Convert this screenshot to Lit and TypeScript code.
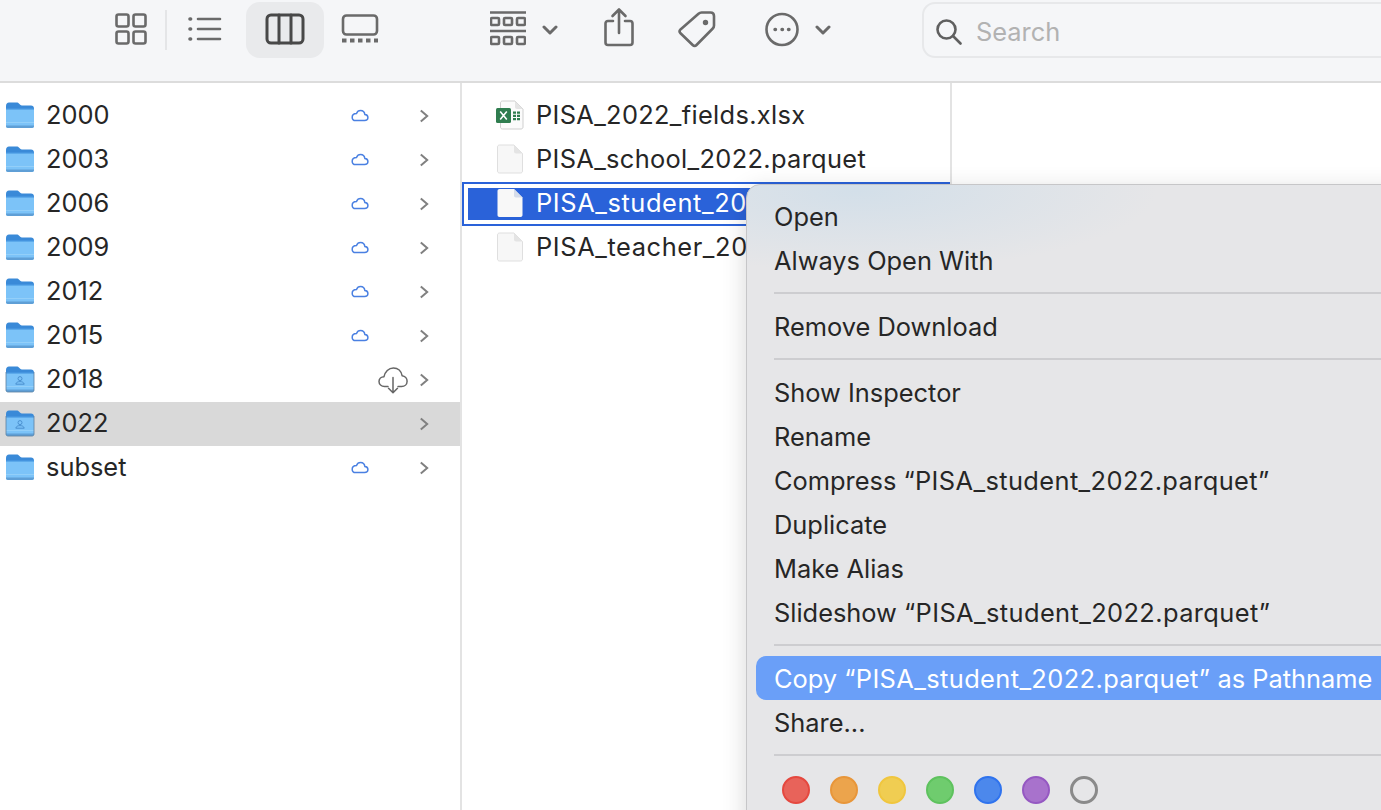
import { LitElement, html, css, svg } from "lit";
import { customElement } from "lit/decorators.js";

const folders = [
  { name: "2000", badge: "cloud" },
  { name: "2003", badge: "cloud" },
  { name: "2006", badge: "cloud" },
  { name: "2009", badge: "cloud" },
  { name: "2012", badge: "cloud" },
  { name: "2015", badge: "cloud" },
  { name: "2018", badge: "download", shared: true },
  { name: "2022", badge: "", shared: true, active: true },
  { name: "subset", badge: "cloud" },
];

// the last two names run under the context menu, only the visible part is kept
const files = [
  { name: "PISA_2022_fields.xlsx", kind: "xlsx" },
  { name: "PISA_school_2022.parquet", kind: "doc" },
  { name: "PISA_student_20", kind: "doc", selected: true, covered: true },
  { name: "PISA_teacher_20", kind: "doc", covered: true },
];

const fileName = html`<span class="fname">“PISA_student_2022.parquet”</span>`;

const tagColors = ["red", "orange", "yellow", "green", "blue", "purple", "none"];

const folderIcon = (shared?: boolean) => html`
  <svg class="folder" viewBox="0 0 30 28" width="30" height="28">
    <path d="M1 5C1 2.800 2.200 1.500 4 1.500h7.500c1.300 0 1.900.4 2.700 1.200l1 1c.5.5 1 .8 1.800.8H26c1.800 0 3 1.200 3 3v6H1z" fill="#3a8ad8" />
    <path d="M1 8h28v17c0 1.200-.8 2-2 2H3c-1.200 0-2-.8-2-2z" fill="#7cc3f8" />
    <path d="M1 7.500h28v1.200H1z" fill="#4f9fe6" />
    <path d="M1 21h28v1H1z" fill="#93cff9" />
    <path d="M1 25c0 1.200.8 2 2 2h24c1.200 0 2-.8 2-2v-.6H1z" fill="#5f9fd6" />
    ${shared
      ? svg`<g fill="none" stroke="#4a90d0" stroke-width="1">
          <circle cx="15" cy="13.600" r="2" />
          <path d="M10.800 19.200c.3-1.800 2-2.600 4.200-2.600s3.900.8 4.200 2.600z" />
        </g>
        <path d="M1 7v18c0 1.200.8 2 2 2h24c1.200 0 2-.8 2-2V7" fill="none" stroke="#5a7f9f" stroke-width=".8" />`
      : ""}
  </svg>
`;

const cloudIcon = html`
  <svg class="cloud" viewBox="0 0 18 14" width="18" height="14">
    <path d="M4.600 12.600h8.900c1.900 0 3.400-1.300 3.400-3 0-1.600-1.300-2.900-3-3-.4-2.400-2.200-4-4.300-4-1.900 0-3.400 1.100-4.100 2.900C3 5.600 1.200 7.100 1.200 9.200c0 2 1.400 3.400 3.400 3.400z" fill="none" stroke="#4a80e2" stroke-width="1.500" />
  </svg>
`;

const downloadIcon = html`
  <svg class="download" viewBox="0 0 30 28" width="30" height="28">
    <g fill="none" stroke="#666" stroke-width="1.500" stroke-linecap="round" stroke-linejoin="round">
      <path d="M10 20.500H6.600C3.300 20.500 1 18.300 1 15.600c0-2.800 2.300-4.800 5-4.900C7 6 10.600 2 15.400 2c4.600 0 7.900 3.200 8.700 7.700 2.900.3 5 2.700 5 5.500 0 3-2.400 5.300-5.500 5.300H20" />
      <path d="M15 11.500v15M10.500 22.200l4.500 4.600 4.500-4.600" />
    </g>
  </svg>
`;

const chevron = html`
  <svg class="chevron" viewBox="0 0 10 14" width="10" height="14">
    <path d="M1.800 1.400 8.200 7l-6.400 5.600" fill="none" stroke="#808080" stroke-width="2" />
  </svg>
`;

const docIcon = (selected?: boolean) => html`
  <svg class="doc" viewBox="0 0 28 30" width="28" height="30">
    <path d="M1.500 3c0-1.200.8-2 2-2H18l8.500 8.500V27c0 1.200-.8 2-2 2h-21c-1.200 0-2-.8-2-2z" fill=${selected ? "#f8f8f8" : "#f7f7f7"} stroke=${selected ? "none" : "#dfdfdf"} />
    <path d="M18 1v6.500c0 1.200.8 2 2 2h6.500z" fill=${selected ? "#d5dcea" : "#e4e4e4"} />
  </svg>
`;

const xlsxIcon = html`
  <svg class="doc" viewBox="0 0 28 30" width="28" height="30">
    <path d="M4.500 3c0-1.200.8-2 2-2H19l8 8v18c0 1.200-.8 2-2 2H6.500c-1.200 0-2-.8-2-2z" fill="#fbfbfb" stroke="#cfcfcf" />
    <path d="M19 1v6c0 1.200.8 2 2 2h6z" fill="#e4e4e4" />
    <rect x="0" y="8" width="15" height="15" rx="1.500" fill="#2f7d4f" />
    <path d="M4.200 11.600 10.800 19.400M10.800 11.600 4.200 19.400" stroke="#fff" stroke-width="1.600" />
    <path d="M17 11.500h3v2.200h-3zM21 11.500h3v2.200h-3zM17 14.800h3V17h-3zM21 14.800h3V17h-3zM17 18.100h3v2.200h-3zM21 18.100h3v2.200h-3z" fill="#2f7d4f" />
  </svg>
`;

@customElement("app-root")
export class AppRoot extends LitElement {
  static styles = css`
    :host {
      display: block;
      position: relative;
      width: 100%;
      height: 810px;
      overflow: hidden;
      background: #fff;
      color: #262626;
      font-family: Inter, "Liberation Sans", sans-serif;
      font-size: 25.4px;
    }
    .toolbar {
      display: flex;
      align-items: flex-start;
      height: 83px;
      box-sizing: border-box;
      padding-left: 115px;
      background: #f5f6f8;
      border-bottom: 2px solid #dcdcdc;
    }
    .toolbar > * {
      flex: none;
    }
    .toolbar svg {
      display: block;
      flex: none;
      fill: none;
      stroke: #6a6a6a;
      stroke-width: 2.600;
      stroke-linecap: round;
      stroke-linejoin: round;
    }
    .divider {
      width: 2px;
      height: 40px;
      margin: 10px 21px 0 18px;
      background: #e4e5e7;
    }
    .active {
      display: flex;
      justify-content: center;
      width: 78px;
      height: 56px;
      margin: 2px 17px 0 24px;
      border-radius: 14px;
      background: #e9eaec;
    }
    .active svg {
      margin-top: -2px;
      stroke: #484848;
      stroke-width: 3;
    }
    .group {
      margin-left: 111px;
    }
    .tool-chevron {
      margin-left: 16px;
    }
    .share {
      margin-left: 46px;
    }
    .tag {
      margin-left: 44px;
    }
    .more {
      margin-left: 49px;
    }
    .search {
      display: flex;
      align-items: center;
      gap: 14px;
      width: 520px;
      height: 56px;
      box-sizing: border-box;
      margin: 2px 0 0 91px;
      padding: 3px 0 0 12px;
      border: 2px solid #e7e8ea;
      border-radius: 13px;
      color: #b2b2b2;
    }
    .columns {
      display: flex;
      height: 727px;
    }
    .col {
      flex: none;
      padding-top: 11px;
      border-right: 2px solid #e3e3e3;
    }
    .col-folders {
      width: 460px;
    }
    .col-files {
      width: 488px;
    }
    .row {
      display: flex;
      align-items: center;
      height: 44px;
      box-sizing: border-box;
    }
    .row svg {
      display: block;
      flex: none;
    }
    .name {
      flex: 1;
      padding-bottom: 3px;
      white-space: nowrap;
    }
    .folder-row {
      padding: 0 31px 0 5px;
    }
    .folder-row.current {
      background: #d9d9d9;
    }
    .folder {
      margin-right: 11px;
      margin-bottom: 3px;
    }
    .cloud {
      margin: 0 50px 3px 1px;
    }
    .download {
      margin: 0 11px 0 0;
    }
    .chevron {
      margin-bottom: 1px;
    }
    .file-row {
      padding-left: 34px;
    }
    .doc {
      margin-right: 12px;
      margin-bottom: 2px;
    }
    .file-row .name {
      letter-spacing: 0.33px;
    }
    .file-row .name.covered {
      letter-spacing: 0.6px;
    }
    .file-row.selected {
      background: #2a62d9;
      box-shadow:
        inset 0 0 0 2px #2a62d9,
        inset 0 0 0 6px #fff;
      color: #fff;
    }
    .menu {
      position: absolute;
      left: 746px;
      top: 184px;
      width: 700px;
      height: 700px;
      box-sizing: border-box;
      padding: 9px 8px 0 9px;
      border: 1px solid #c6c6c8;
      border-radius: 14px;
      background:
        radial-gradient(ellipse 300px 80px at 110px 6px, #d3dfe9, rgba(211, 223, 233, 0)),
        #e6e6e8;
      box-shadow: 0 6px 24px rgba(0, 0, 0, 0.16);
    }
    .item {
      display: flex;
      align-items: center;
      gap: 0.28em;
      height: 44px;
      box-sizing: border-box;
      padding: 0 0 0 18px;
      white-space: nowrap;
    }
    .fname {
      letter-spacing: 0.4px;
    }
    .item.hot {
      border-radius: 10px;
      background: #6a9ff8;
      color: #fff;
    }
    .sep {
      height: 2px;
      margin: 10px 0 10px 18px;
      background: #cdcdd0;
    }
    .tags {
      display: flex;
      gap: 20px;
      padding: 10px 0 0 26px;
    }
    .dot {
      width: 28px;
      height: 28px;
      box-sizing: border-box;
      border: 2px solid;
      border-radius: 50%;
    }
    .red { background: #e8635a; border-color: #e5483f; }
    .orange { background: #eca44c; border-color: #e8963a; }
    .yellow { background: #f0cd52; border-color: #f0c63e; }
    .green { background: #6fcc6e; border-color: #5ec25e; }
    .blue { background: #4c88ec; border-color: #2f73ee; }
    .purple { background: #a872cc; border-color: #9558c2; }
    .none { border: 3px solid #8a8a8a; }
  `;

  renderToolbar() {
    return html`
      <div class="toolbar">
        <svg viewBox="0 0 32 60" width="32" height="60">
          <rect x="1.500" y="14.500" width="12" height="12" rx="2" />
          <rect x="18.500" y="14.500" width="12" height="12" rx="2" />
          <rect x="1.500" y="31.500" width="12" height="12" rx="2" />
          <rect x="18.500" y="31.500" width="12" height="12" rx="2" />
        </svg>
        <div class="divider"></div>
        <svg viewBox="0 0 34 60" width="34" height="60">
          <path d="M10 19h22M10 29h22M10 39h22" />
          <path d="M2 19h.6M2 29h.6M2 39h.6" stroke-width="3.600" />
        </svg>
        <div class="active">
          <svg viewBox="0 0 40 60" width="40" height="60">
            <rect x="2" y="15" width="36" height="28" rx="4" />
            <path d="M14 15v28M26 15v28" />
          </svg>
        </div>
        <svg viewBox="0 0 38 60" width="38" height="60">
          <rect x="2" y="15.500" width="34" height="19" rx="3.500" />
          <path d="M1 40.500h4.500M9 40.500h4.500M17 40.500h4.500M25 40.500h4.500M33 40.500h4" stroke-width="4" stroke-linecap="butt" />
        </svg>
        <svg class="group" viewBox="0 0 36 60" width="36" height="60">
          <path d="M0 12.500h36M0 31h36" />
          <rect x="1" y="18" width="8" height="7" rx="1" />
          <rect x="14" y="18" width="8" height="7" rx="1" />
          <rect x="27" y="18" width="8" height="7" rx="1" />
          <rect x="1" y="37" width="8" height="7" rx="1" />
          <rect x="14" y="37" width="8" height="7" rx="1" />
          <rect x="27" y="37" width="8" height="7" rx="1" />
        </svg>
        <svg class="tool-chevron" viewBox="0 0 16 60" width="16" height="60">
          <path d="M2 27l6 6 6-6" stroke-width="3" />
        </svg>
        <svg class="share" viewBox="0 0 30 60" width="30" height="60">
          <path d="M9 21H4c-1.500 0-2.500 1-2.500 2.500v19C1.500 44 2.500 45 4 45h22c1.500 0 2.500-1 2.500-2.500v-19C28.500 22 27.500 21 26 21h-5" />
          <path d="M15 33V10M8.500 16 15 9.500l6.500 6.500" />
        </svg>
        <svg class="tag" viewBox="0 0 38 60" width="38" height="60">
          <path d="M23.500 12.500h9c2.200 0 3.500 1.300 3.500 3.500v9.500c0 1.200-.4 2.100-1.200 3L18.500 45c-1.200 1.200-2.600 1.200-3.800 0L2.500 33.200c-1.200-1.200-1.200-2.600 0-3.800L20.500 13.700c.9-.8 1.800-1.200 3-1.200z" />
          <circle cx="27.500" cy="22.500" r="1.400" fill="#6a6a6a" />
        </svg>
        <svg class="more" viewBox="0 0 34 60" width="34" height="60">
          <circle cx="17" cy="29.500" r="15.500" />
          <path d="M10 29.500h.5M17 29.500h.5M23.500 29.500h.5" stroke-width="3.400" />
        </svg>
        <svg class="tool-chevron" viewBox="0 0 16 60" width="16" height="60">
          <path d="M2 27l6 6 6-6" stroke-width="3" />
        </svg>
        <div class="search">
          <svg viewBox="0 0 26 26" width="26" height="26">
            <circle cx="10.500" cy="10.500" r="9" stroke="#606060" />
            <path d="M17 17l7.500 7.500" stroke="#606060" />
          </svg>
          <span>Search</span>
        </div>
      </div>
    `;
  }

  renderMenu() {
    return html`
      <div class="menu">
        <div class="item">Open</div>
        <div class="item">Always Open With</div>
        <div class="sep"></div>
        <div class="item">Remove Download</div>
        <div class="sep"></div>
        <div class="item">Show Inspector</div>
        <div class="item">Rename</div>
        <div class="item"><span>Compress</span> ${fileName}</div>
        <div class="item">Duplicate</div>
        <div class="item">Make Alias</div>
        <div class="item"><span>Slideshow</span> ${fileName}</div>
        <div class="sep"></div>
        <div class="item hot"><span>Copy</span> ${fileName} <span>as Pathname</span></div>
        <div class="item">Share...</div>
        <div class="sep"></div>
        <div class="tags">
          ${tagColors.map((c) => html`<div class="dot ${c}"></div>`)}
        </div>
      </div>
    `;
  }

  render() {
    return html`
      ${this.renderToolbar()}
      <div class="columns">
        <div class="col col-folders">
          ${folders.map(
            (f) => html`
              <div class="row folder-row ${f.active ? "current" : ""}">
                ${folderIcon(f.shared)}
                <span class="name">${f.name}</span>
                ${f.badge === "cloud" ? cloudIcon : ""}
                ${f.badge === "download" ? downloadIcon : ""}
                ${chevron}
              </div>
            `
          )}
        </div>
        <div class="col col-files">
          ${files.map(
            (f) => html`
              <div class="row file-row ${f.selected ? "selected" : ""}">
                ${f.kind === "xlsx" ? xlsxIcon : docIcon(f.selected)}
                <span class="name ${f.covered ? "covered" : ""}">${f.name}</span>
              </div>
            `
          )}
        </div>
      </div>
      ${this.renderMenu()}
    `;
  }
}
